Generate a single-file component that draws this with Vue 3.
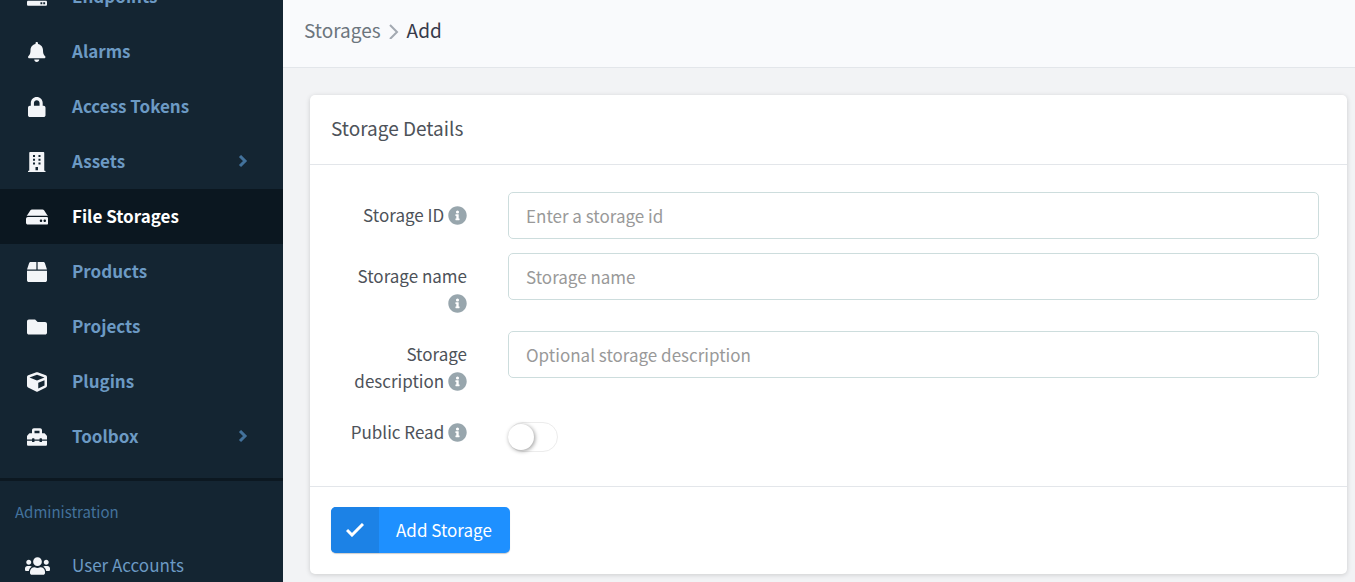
<script setup>
import { ref } from 'vue'

const icons = {
  server: {
    width: 512,
    path: 'M480 32H32C14 32 0 46 0 64v64c0 18 14 32 32 32h448c18 0 32-14 32-32V64c0-18-14-32-32-32zM480 192H32c-18 0-32 14-32 32v64c0 18 14 32 32 32h448c18 0 32-14 32-32v-64c0-18-14-32-32-32zM480 352H32c-18 0-32 14-32 32v64c0 18 14 32 32 32h448c18 0 32-14 32-32v-64c0-18-14-32-32-32zM344 392h48v48h-48zM416 392h48v48h-48z'
  },
  bell: {
    width: 448,
    path: 'M224 512c35.32 0 63.97-28.65 63.97-64H160.03c0 35.35 28.65 64 63.97 64zm215.39-149.71c-19.32-20.76-55.47-51.99-55.47-154.29 0-77.7-54.48-139.9-127.94-155.16V32c0-17.67-14.32-32-31.98-32s-31.98 14.33-31.98 32v20.84C118.56 68.1 64.08 130.3 64.08 208c0 102.3-36.15 133.53-55.47 154.29-6 6.45-8.66 14.16-8.61 21.71.11 16.4 12.98 32 32.1 32h383.8c19.12 0 32-15.6 32.1-32 .05-7.55-2.61-15.27-8.61-21.71z'
  },
  lock: {
    width: 448,
    path: 'M400 224h-24v-72C376 68.2 307.8 0 224 0S72 68.2 72 152v72H48c-26.5 0-48 21.5-48 48v192c0 26.5 21.5 48 48 48h352c26.5 0 48-21.5 48-48V272c0-26.5-21.5-48-48-48zm-104 0H152v-72c0-39.7 32.3-72 72-72s72 32.3 72 72v72z'
  },
  building: {
    width: 448,
    path: 'M436 480h-20V24c0-13.255-10.745-24-24-24H56C42.745 0 32 10.745 32 24v456H12c-6.627 0-12 5.373-12 12v20h448v-20c0-6.627-5.373-12-12-12zM128 76h52v52h-52zM268 76h52v52h-52zM128 172h52v52h-52zM268 172h52v52h-52zM128 268h52v52h-52zM268 268h52v52h-52zM192 384h64v80h-64z'
  },
  hdd: {
    width: 576,
    path: 'M576 304v96c0 26.51-21.49 48-48 48H48c-26.51 0-48-21.49-48-48v-96c0-26.51 21.49-48 48-48h480c26.51 0 48 21.49 48 48zm-48-80a79.557 79.557 0 0 1 30.777 6.165L462.25 85.374A48.003 48.003 0 0 0 422.311 64H153.689a48 48 0 0 0-39.938 21.374L17.223 230.165A79.557 79.557 0 0 1 48 224h480zm-48 96c-17.673 0-32 14.327-32 32s14.327 32 32 32 32-14.327 32-32-14.327-32-32-32zm-96 0c-17.673 0-32 14.327-32 32s14.327 32 32 32 32-14.327 32-32-14.327-32-32-32z'
  },
  box: {
    width: 512,
    path: 'M509.5 184.6L458.9 32.8C452.4 13.2 434.1 0 413.4 0H272v192h238.7c-.4-2.5-.4-5-1.2-7.4zM240 0H98.6c-20.7 0-39 13.2-45.5 32.8L2.5 184.6c-.8 2.4-.8 4.9-1.2 7.4H240V0zM0 224v240c0 26.5 21.5 48 48 48h416c26.5 0 48-21.5 48-48V224H0z'
  },
  folder: {
    width: 512,
    path: 'M464 128H272l-64-64H48C21.49 64 0 85.49 0 112v288c0 26.51 21.49 48 48 48h416c26.51 0 48-21.49 48-48V176c0-26.51-21.49-48-48-48z'
  },
  cube: {
    width: 512,
    path: 'M239.1 6.3l-208 78c-18.7 7-31.1 25-31.1 45v225.1c0 18.2 10.3 34.8 26.5 42.9l208 104c13.5 6.8 29.4 6.8 42.9 0l208-104c16.3-8.1 26.5-24.8 26.5-42.9V129.3c0-20-12.4-37.9-31.1-44.9l-208-78C262 2.2 250 2.2 239.1 6.3zM256 68.4l192 72v1.1l-192 78-192-78v-1.1l192-72zm32 356V275.5l160-65v133.9l-160 80z'
  },
  toolbox: {
    width: 512,
    path: 'M502.63 214.63l-45.25-45.25c-6-6-14.14-9.37-22.63-9.37H384V80c0-26.51-21.49-48-48-48H176c-26.51 0-48 21.49-48 48v80H77.25c-8.49 0-16.62 3.37-22.63 9.37L9.37 214.63c-6 6-9.37 14.14-9.37 22.63V320h128v-16c0-8.84 7.16-16 16-16h32c8.84 0 16 7.16 16 16v16h128v-16c0-8.84 7.16-16 16-16h32c8.84 0 16 7.16 16 16v16h128v-82.75c0-8.48-3.37-16.62-9.37-22.62zM320 160H192V96h128v64zm64 208c0 8.84-7.16 16-16 16h-32c-8.84 0-16-7.16-16-16v-16H192v16c0 8.84-7.16 16-16 16h-32c-8.84 0-16-7.16-16-16v-16H0v96c0 17.67 14.33 32 32 32h448c17.67 0 32-14.33 32-32v-96H384v16z'
  },
  users: {
    width: 640,
    path: 'M96 224c35.3 0 64-28.7 64-64s-28.7-64-64-64-64 28.7-64 64 28.7 64 64 64zm448 0c35.3 0 64-28.7 64-64s-28.7-64-64-64-64 28.7-64 64 28.7 64 64 64zm32 32h-64c-17.6 0-33.5 7.1-45.1 18.6 40.3 22.1 68.9 62 75.1 109.4h66c17.7 0 32-14.3 32-32v-32c0-35.3-28.7-64-64-64zm-256 0c61.9 0 112-50.1 112-112S381.9 32 320 32 208 82.1 208 144s50.1 112 112 112zm76.8 32h-8.3c-20.8 10-43.9 16-68.5 16s-47.6-6-68.5-16h-8.3C179.6 288 128 339.6 128 403.2V432c0 26.5 21.5 48 48 48h288c26.5 0 48-21.5 48-48v-28.8c0-63.6-51.6-115.2-115.2-115.2zm-223.7-13.4C161.5 263.1 145.6 256 128 256H64c-35.3 0-64 28.7-64 64v32c0 17.7 14.3 32 32 32h65.9c6.3-47.4 34.9-87.3 75.2-109.4z'
  }
}

const mainItems = [
  { label: 'Endpoints', icon: 'server' },
  { label: 'Alarms', icon: 'bell' },
  { label: 'Access Tokens', icon: 'lock' },
  { label: 'Assets', icon: 'building', expandable: true },
  { label: 'File Storages', icon: 'hdd', active: true },
  { label: 'Products', icon: 'box' },
  { label: 'Projects', icon: 'folder' },
  { label: 'Plugins', icon: 'cube' },
  { label: 'Toolbox', icon: 'toolbox', expandable: true }
]
const adminItems = [{ label: 'User Accounts', icon: 'users' }]

const fields = [
  { id: 'storage-id', label: 'Storage ID', placeholder: 'Enter a storage id', value: ref('') },
  { id: 'storage-name', label: 'Storage name', placeholder: 'Storage name', value: ref('') },
  { id: 'storage-description', label: 'Storage description', placeholder: 'Optional storage description', value: ref('') }
]
const publicRead = ref(false)

const infoPath = 'M256 8C119 8 8 119 8 256s111 248 248 248 248-111 248-248S393 8 256 8zm0 110a42 42 0 1 1 0 84 42 42 0 0 1 0-84zm56 254c0 7-5 12-12 12h-88c-7 0-12-5-12-12v-24c0-7 5-12 12-12h12v-64h-12c-7 0-12-5-12-12v-24c0-7 5-12 12-12h64c7 0 12 5 12 12v100h12c7 0 12 5 12 12z'
</script>

<template>
  <div class="app">
    <aside class="sidebar">
      <nav>
        <ul class="menu menu-main">
          <li v-for="item in mainItems" :key="item.label">
            <a href="#" class="menu-link" :class="{ active: item.active }">
              <span class="menu-icon">
                <svg :viewBox="`0 0 ${icons[item.icon].width} 512`" aria-hidden="true">
                  <path fill-rule="evenodd" :d="icons[item.icon].path" />
                </svg>
              </span>
              <span class="menu-label">{{ item.label }}</span>
              <svg v-if="item.expandable" class="menu-arrow" viewBox="0 0 10 14" aria-hidden="true">
                <path d="M2 1l5 5-5 5" />
              </svg>
            </a>
          </li>
        </ul>
        <h2 class="menu-heading">Administration</h2>
        <ul class="menu">
          <li v-for="item in adminItems" :key="item.label">
            <a href="#" class="menu-link">
              <span class="menu-icon">
                <svg :viewBox="`0 0 ${icons[item.icon].width} 512`" aria-hidden="true">
                  <path :d="icons[item.icon].path" />
                </svg>
              </span>
              <span class="menu-label">{{ item.label }}</span>
            </a>
          </li>
        </ul>
      </nav>
    </aside>

    <main class="content">
      <header class="page-head">
        <a href="#" class="crumb">Storages</a>
        <svg class="crumb-sep" viewBox="0 0 10 16" aria-hidden="true"><path d="M1 2l7 7-7 7" /></svg>
        <span class="crumb-current">Add</span>
      </header>

      <form class="card" @submit.prevent>
        <h1 class="card-head">Storage Details</h1>
        <div class="card-body">
          <div v-for="field in fields" :key="field.id" class="row">
            <label :for="field.id">
              {{ field.label }}
              <svg class="info" viewBox="0 0 512 512" aria-hidden="true"><path fill-rule="evenodd" :d="infoPath" /></svg>
            </label>
            <input :id="field.id" v-model="field.value.value" type="text" class="text-input" :placeholder="field.placeholder">
          </div>
          <div class="row">
            <label for="public-read">
              Public Read
              <svg class="info" viewBox="0 0 512 512" aria-hidden="true"><path fill-rule="evenodd" :d="infoPath" /></svg>
            </label>
            <input id="public-read" v-model="publicRead" type="checkbox" class="toggle">
          </div>
        </div>
        <div class="card-foot">
          <button type="submit" class="submit">
            <span class="submit-icon">
              <svg viewBox="0 0 18 14" aria-hidden="true"><path d="M1 7l5 5L17 1" /></svg>
            </span>
            <span class="submit-label">Add Storage</span>
          </button>
        </div>
      </form>
    </main>
  </div>
</template>

<style>
body {
  margin: 0;
  background: #f2f3f5;
}
</style>

<style scoped>
.app {
  display: flex;
  height: 100vh;
  overflow: hidden;
  font-family: "Noto Sans CJK SC", "Noto Sans", sans-serif;
  font-size: 17px;
  line-height: 27px;
  color: #4d5259;
}

.app *,
.app *::before {
  box-sizing: border-box;
}

.sidebar {
  flex: 0 0 283px;
  overflow: hidden;
  background: #142532;
}

.menu {
  list-style: none;
  margin: 0;
  padding: 0;
}

/* The menu is scrolled a little, so its first entry is partly hidden. */
.menu-main {
  margin-top: -31px;
  padding-bottom: 14px;
  border-bottom: 3px solid #0c1821;
  font-weight: 700;
}

.menu-link {
  display: flex;
  align-items: center;
  height: 55px;
  padding: 0 35px 0 22px;
  color: #6c9ac4;
  text-decoration: none;
}

.menu-link.active {
  background: #0b1720;
  color: #fff;
}

.menu-icon {
  display: flex;
  justify-content: center;
  width: 30px;
  margin-right: 20px;
}

.menu-icon svg {
  height: 20px;
  fill: #f3f5f8;
}

.menu-label {
  flex: 1;
  padding-bottom: 2px;
}

.menu-arrow {
  width: 10px;
  height: 14px;
  fill: none;
  stroke: #43729c;
  stroke-width: 3;
}

.menu-heading {
  margin: 0;
  padding: 17px 15px 13px;
  color: #43729c;
  font-size: 15px;
  font-weight: 400;
  line-height: 27px;
}

.content {
  flex: 1;
  min-width: 0;
}

.page-head {
  display: flex;
  align-items: center;
  height: 68px;
  padding: 0 21px 8px;
  background: #f9fafc;
  border-bottom: 1px solid #e3e6ea;
  font-size: 19px;
}

.crumb {
  color: #6c757d;
  text-decoration: none;
}

.crumb-sep {
  width: 10px;
  height: 16px;
  margin: 3px 8px 0;
  fill: none;
  stroke: #a3a9b1;
  stroke-width: 2;
}

.crumb-current {
  color: #373a4a;
}

.card {
  margin: 27px 8px 0 27px;
  background: #fff;
  border-radius: 5px;
  box-shadow: 0 1px 5px rgba(0, 0, 0, 0.16);
}

.card-head {
  margin: 0;
  padding: 19px 21px 23px;
  border-bottom: 1px solid #e3e6ea;
  font-size: 19px;
  font-weight: 400;
  line-height: 27px;
}

.card-body {
  padding: 27px 28px 20px;
}

.row {
  display: grid;
  grid-template-columns: 129px 1fr;
  column-gap: 41px;
  align-items: start;
  margin-bottom: 14px;
}

.row label {
  padding: 9px 0 1px;
  text-align: right;
}

.info {
  width: 19px;
  height: 19px;
  vertical-align: -3px;
  fill: #98a6ad;
}

.text-input {
  width: 100%;
  height: 47px;
  padding: 0 17px;
  border: 1px solid #cddddd;
  border-radius: 5px;
  background: #fff;
  color: #4d5259;
  font: inherit;
}

.text-input::placeholder {
  color: #999;
  opacity: 1;
}

.toggle {
  appearance: none;
  width: 50px;
  height: 30px;
  margin: 13px 0 0;
  border: 1px solid #ececec;
  border-radius: 15px;
  background: #fff;
}

.toggle::before {
  content: "";
  display: block;
  width: 26px;
  height: 26px;
  margin: 1px 0 0 -1px;
  border-radius: 50%;
  background: #fff;
  box-shadow: 1px 1px 4px rgba(0, 0, 0, 0.4);
}

.toggle:checked {
  background: #1e90ff;
}

.toggle:checked::before {
  margin-left: 22px;
}

.card-foot {
  padding: 20px 21px 21px;
  border-top: 1px solid #e3e6ea;
}

.submit {
  display: flex;
  height: 46px;
  padding: 0;
  overflow: hidden;
  border: 0;
  border-radius: 5px;
  background: #1e90ff;
  box-shadow: 0 1px 1px rgba(0, 0, 0, 0.2);
  color: #fff;
  font: inherit;
}

.submit-icon {
  display: flex;
  align-items: center;
  justify-content: center;
  align-self: stretch;
  width: 48px;
  background: #1c82e6;
}

.submit-icon svg {
  width: 18px;
  height: 14px;
  fill: none;
  stroke: #fff;
  stroke-width: 3;
}

.submit-label {
  align-self: center;
  padding: 0 18px 1px 17px;
}
</style>
